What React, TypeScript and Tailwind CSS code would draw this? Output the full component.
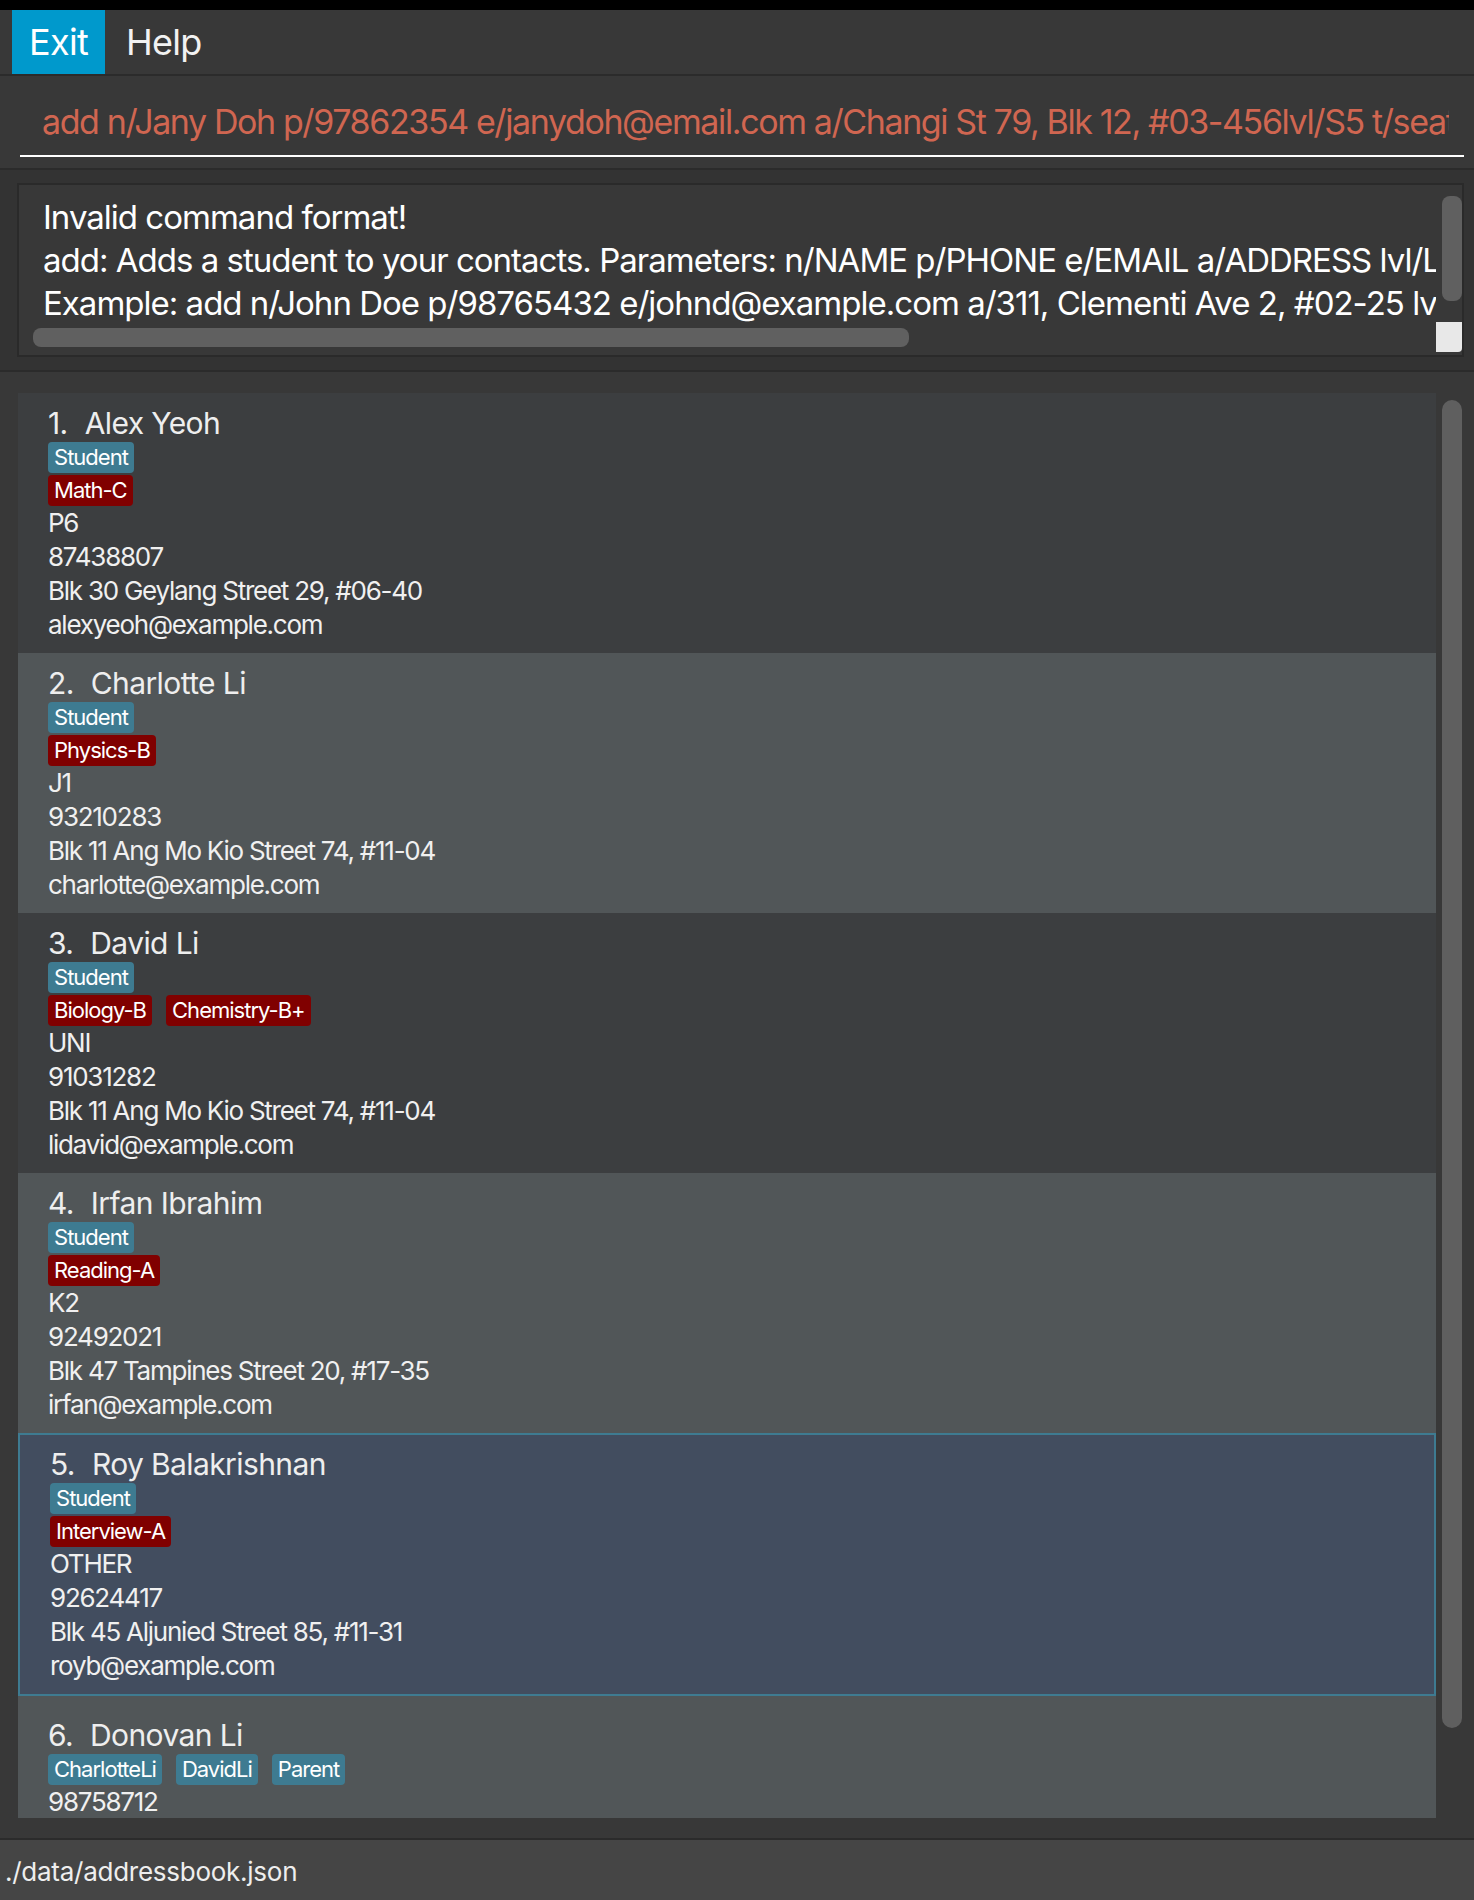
import React from "react";

type Person = {
  name: string;
  roles: string[];
  subjects: string[];
  level?: string;
  phone: string;
  address?: string;
  email?: string;
};

const people: Person[] = [
  { name: "Alex Yeoh", roles: ["Student"], subjects: ["Math-C"], level: "P6", phone: "87438807", address: "Blk 30 Geylang Street 29, #06-40", email: "alexyeoh@example.com" },
  { name: "Charlotte Li", roles: ["Student"], subjects: ["Physics-B"], level: "J1", phone: "93210283", address: "Blk 11 Ang Mo Kio Street 74, #11-04", email: "charlotte@example.com" },
  { name: "David Li", roles: ["Student"], subjects: ["Biology-B", "Chemistry-B+"], level: "UNI", phone: "91031282", address: "Blk 11 Ang Mo Kio Street 74, #11-04", email: "lidavid@example.com" },
  { name: "Irfan Ibrahim", roles: ["Student"], subjects: ["Reading-A"], level: "K2", phone: "92492021", address: "Blk 47 Tampines Street 20, #17-35", email: "irfan@example.com" },
  { name: "Roy Balakrishnan", roles: ["Student"], subjects: ["Interview-A"], level: "OTHER", phone: "92624417", address: "Blk 45 Aljunied Street 85, #11-31", email: "royb@example.com" },
  { name: "Donovan Li", roles: ["CharlotteLi", "DavidLi", "Parent"], subjects: [], phone: "98758712" },
];

function Tag({ label, red }: { label: string; red?: boolean }) {
  return (
    <span
      className={
        "h-[31px] px-[6px] rounded-[4px] text-[22px] leading-[31px] tracking-[-0.045em] text-white whitespace-nowrap " +
        (red ? "bg-[#800000]" : "bg-[#3e7b91]")
      }
    >
      {label}
    </span>
  );
}

function Card({ p, index }: { p: Person; index: number }) {
  const selected = index === 5;
  const even = index % 2 === 0;
  const last = index === 6;
  let cls = "w-full shrink-0 pl-[30px] ";
  if (selected) {
    cls += "bg-[#424d5f] border-2 border-[#3e7b91] pt-[10px] pb-[11px]";
  } else if (even) {
    cls += "bg-[#515658] pt-[11px] pb-[11px]";
  } else {
    cls += "bg-[#3c3e40] pt-[11px] pb-[11px]";
  }
  if (last) cls = "w-full shrink-0 pl-[30px] bg-[#515658] pt-[20px] pb-[11px]";
  return (
    <div className={cls}>
      <div className="flex gap-[17px] h-[38px] text-[30px] leading-[38px] tracking-[-0.02em] text-[#eeeeee] whitespace-nowrap">
        <span>{index}.</span>
        <span>{p.name}</span>
      </div>
      <div className="flex gap-[14px] h-[31px]">
        {p.roles.map((r) => (
          <Tag key={r} label={r} />
        ))}
      </div>
      {p.subjects.length > 0 && (
        <div className="flex gap-[14px] h-[31px] mt-[2px]">
          {p.subjects.map((s) => (
            <Tag key={s} label={s} red />
          ))}
        </div>
      )}
      <div className="text-[26px] leading-[34px] tracking-[-0.048em] text-[#f0f0f0] whitespace-nowrap">
        {p.level && <div>{p.level}</div>}
        <div>{p.phone}</div>
        {p.address && <div>{p.address}</div>}
        {p.email && <div>{p.email}</div>}
      </div>
    </div>
  );
}

export default function App() {
  return (
    <div
      className="w-[1474px] h-[1900px] flex flex-col bg-[#383838] overflow-hidden"
      style={{ fontFamily: "Inter, 'Noto Sans', sans-serif" }}
    >
      {/* top black strip */}
      <div className="h-[10px] bg-black shrink-0" />

      {/* menu bar */}
      <div className="h-[64px] shrink-0 flex bg-[#383838] text-[36px] leading-[64px]">
        <div className="ml-[12px] w-[93px] bg-[#0099cc] text-white text-center tracking-[-0.02em]">Exit</div>
        <div className="pl-[21px] text-[#f2f2f2] tracking-[-0.02em]">Help</div>
      </div>
      <div className="h-[2px] bg-[#2b2b2b] shrink-0" />

      {/* command box */}
      <div className="h-[92px] shrink-0 bg-[#383838] px-[10px] pt-[24px]">
        <div className="ml-[10px] w-[1444px] border-b-2 border-white pl-[22px] pr-[15px] pb-[11px]">
          <div className="h-[44px] overflow-hidden whitespace-nowrap text-[34px] leading-[44px] text-[#d06651] tracking-[-0.041em]">
            add n/Jany Doh p/97862354 e/janydoh@email.com a/Changi St 79, Blk 12, #03-456lvl/S5 t/seat 1 s/Math
          </div>
        </div>
      </div>
      <div className="h-[2px] bg-[#2b2b2b] shrink-0" />

      {/* result display */}
      <div className="h-[200px] shrink-0 bg-[#333333] pt-[13px] pl-[17px] pr-[10px]">
        <div className="relative h-[174px] w-[1447px] border-2 border-[#2a2a2a] bg-[#383838]">
          <div className="mr-[26px] pl-[24px] pt-[11px] overflow-hidden whitespace-nowrap text-[33px] leading-[43px] text-white tracking-[-0.03em]">
            <div>Invalid command format!</div>
            <div>add: Adds a student to your contacts. Parameters: n/NAME p/PHONE e/EMAIL a/ADDRESS lvl/LEVEL [t/TAG]... [s/SUBJECT]...</div>
            <div>Example: add n/John Doe p/98765432 e/johnd@example.com a/311, Clementi Ave 2, #02-25 lvl/S4 t/student s/Math-A</div>
          </div>
          {/* vertical scrollbar thumb */}
          <div className="absolute right-0 top-[11px] w-[20px] h-[105px] rounded-[8px] bg-[#606060]" />
          {/* horizontal scrollbar thumb */}
          <div className="absolute left-[14px] top-[143px] w-[876px] h-[19px] rounded-[8px] bg-[#606060]" />
          {/* corner */}
          <div className="absolute right-0 bottom-[3px] w-[26px] h-[30px] rounded-br-[4px] bg-[#e8e8e8]" />
        </div>
      </div>
      <div className="h-[2px] bg-[#2b2b2b] shrink-0" />

      {/* person list */}
      <div className="h-[1466px] shrink-0 bg-[#383838] pt-[21px] pb-[20px] pl-[18px] flex">
        <div className="w-[1418px] h-[1425px] overflow-hidden flex flex-col">
          {people.map((p, i) => (
            <Card key={p.name} p={p} index={i + 1} />
          ))}
        </div>
        <div className="ml-[6px] w-[20px] pt-[7px]">
          <div className="w-[20px] h-[1328px] rounded-[10px] bg-[#5f5f5f]" />
        </div>
      </div>
      <div className="h-[2px] bg-[#2b2b2b] shrink-0" />

      {/* status bar */}
      <div className="h-[60px] shrink-0 bg-[#454545] pl-[5px] pt-[3px] text-[26px] leading-[57px] tracking-[-0.01em] text-[#eeeeee]">
        ./data/addressbook.json
      </div>
    </div>
  );
}
